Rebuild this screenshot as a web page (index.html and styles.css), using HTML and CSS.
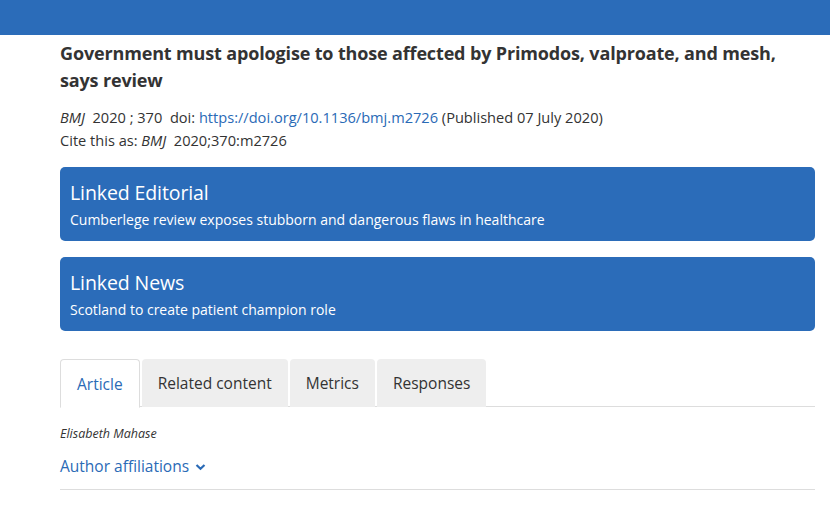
FILE: index.html
```html
<!DOCTYPE html>
<html>
<head>
<meta charset="utf-8">
<link rel="stylesheet" href="styles.css">
</head>
<body>
<header class="topbar"></header>
<main class="content">
  <h1 class="title">Government must apologise to those affected by Primodos, valproate, and mesh, says review</h1>
  <div class="meta">
    <p class="meta-line"><em>BMJ</em>&nbsp; 2020 ; 370&nbsp; doi: <a class="link" href="#">https://doi.org/10.1136/bmj.m2726</a> (Published 07 July 2020)</p>
    <p class="meta-line">Cite this as: <em>BMJ</em>&nbsp; 2020;370:m2726</p>
  </div>
  <a class="linked" href="#">
    <span class="linked-title">Linked Editorial</span>
    <span class="linked-sub">Cumberlege review exposes stubborn and dangerous flaws in healthcare</span>
  </a>
  <a class="linked" href="#">
    <span class="linked-title">Linked News</span>
    <span class="linked-sub">Scotland to create patient champion role</span>
  </a>
  <nav class="tabs">
    <span class="tab tab-active">Article</span>
    <span class="tab">Related content</span>
    <span class="tab">Metrics</span>
    <span class="tab">Responses</span>
  </nav>
  <p class="author">Elisabeth Mahase</p>
  <div class="affil">
    <span>Author affiliations</span>
    <svg class="chev" width="11" height="8" viewBox="0 0 11 8"><path d="M1.5 2 L5.5 5.8 L9.5 2" fill="none" stroke="#2a6ab6" stroke-width="2.2"/></svg>
  </div>
</main>
</body>
</html>
```
FILE: styles.css
```css
* { box-sizing: border-box; }
html, body { margin: 0; padding: 0; background: #fff; }
body { font-family: "Open Sans", "Noto Sans", sans-serif; color: #333; width: 830px; height: 510px; overflow: hidden; }
.topbar { height: 35px; background: #2b6cb9; }
.content { padding: 5px 15px 0 60px; }
.title { margin: 0; font-size: 18px; font-weight: 700; line-height: 27px; color: #333; letter-spacing: -0.15px; }
.meta { margin-top: 12px; }
.meta-line { margin: 0; font-size: 14.6px; line-height: 23px; color: #333; letter-spacing: 0; }
.link { color: #2a6ab6; text-decoration: none; }
.linked { display: flex; flex-direction: column; background: #2b6cb9; color: #fff; border-radius: 5px; text-decoration: none; padding: 12px 10px 10px; margin-top: 15px; height: 74px; }
.linked + .linked { margin-top: 16px; }
.linked-title { font-size: 19.5px; line-height: 28px; letter-spacing: -0.1px; }
.linked-sub { font-size: 14px; line-height: 22px; letter-spacing: 0; margin-top: 2px; }
.tabs { display: flex; gap: 2px; margin-top: 28px; border-bottom: 1px solid #ddd; height: 48px; }
.tab { background: #eee; font-size: 15.5px; color: #333; padding: 0 16px; display: flex; align-items: center; border-radius: 4px 4px 0 0; height: 48px; letter-spacing: 0; }
.tab-active { background: #fff; color: #2a6ab6; border: 1px solid #ddd; border-bottom: 1px solid #fff; height: 49px; }
.author { margin: 19px 0 0; font-size: 12.5px; font-style: italic; line-height: 16px; letter-spacing: 0; }
.affil { display: flex; align-items: center; gap: 6px; margin-top: 14px; padding-bottom: 13px; border-bottom: 1px solid #ddd; color: #2a6ab6; font-size: 15.5px; line-height: 20px; letter-spacing: 0; }
.chev { margin-top: 1px; }
```
